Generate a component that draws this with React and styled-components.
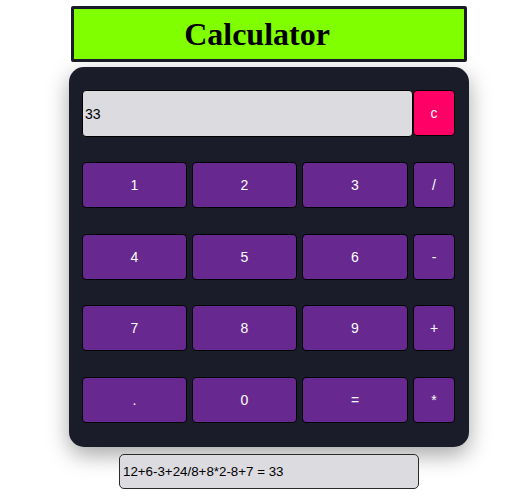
import React from "react";
import styled, { createGlobalStyle } from "styled-components";

const Global = createGlobalStyle`
  html, body { margin: 0; padding: 0; background: #ffffff; }
  body { font-family: "Liberation Sans", Arial, sans-serif; }
`;

const Page = styled.div`
  display: flex;
  flex-direction: column;
  align-items: flex-start;
  padding: 6px 0 0 69px;
`;

const Header = styled.h1`
  box-sizing: border-box;
  margin: 0 0 5px 2px;
  width: 396px;
  height: 56px;
  border: 3px solid #1b1c29;
  border-radius: 2px;
  background: #80ff00;
  padding-right: 24px;
  text-align: center;
  font-family: "Liberation Serif", "Times New Roman", serif;
  font-weight: bold;
  font-size: 32px;
  line-height: 50px;
  color: #000;
`;

const Panel = styled.div`
  box-sizing: border-box;
  width: 400px;
  height: 380px;
  background: #1b1c29;
  border-radius: 15px;
  padding: 23px 14px 24px 13px;
  box-shadow: 0 8px 22px rgba(0, 0, 0, 0.35);
  display: flex;
  flex-direction: column;
  gap: 25px;
`;

const DisplayRow = styled.div`
  display: flex;
  height: 47px;
`;

const Display = styled.div`
  box-sizing: border-box;
  width: 331px;
  height: 47px;
  background: #dcdbe0;
  border: 1px solid #000;
  border-radius: 4px;
  padding: 0 2px;
  display: flex;
  align-items: center;
  font-size: 14px;
  color: #000;
`;

const Keys = styled.div`
  display: grid;
  grid-template-columns: 105px 105px 106px 42px;
  grid-auto-rows: 46px;
  column-gap: 5px;
  row-gap: 25.67px;
`;

const Key = styled.button`
  box-sizing: border-box;
  margin: 0;
  padding: 0;
  width: ${(p) => (p.$w ? p.$w + "px" : "100%")};
  height: ${(p) => (p.$h ? p.$h + "px" : "100%")};
  background: ${(p) => (p.$clear ? "#ff0066" : "#67298f")};
  border: 1px solid #000;
  border-radius: 4px;
  color: #fff;
  font-family: "Liberation Sans", Arial, sans-serif;
  font-size: 14px;
  cursor: pointer;
  display: flex;
  align-items: center;
  justify-content: center;
`;

const Result = styled.div`
  box-sizing: border-box;
  margin: 7px 0 0 50px;
  width: 300px;
  height: 35px;
  background: #dcdbe0;
  border: 1px solid #2a2a2a;
  border-radius: 5px;
  padding: 0 3px;
  display: flex;
  align-items: center;
  font-size: 13.33px;
  color: #000;
`;

const keys = ["1", "2", "3", "/", "4", "5", "6", "-", "7", "8", "9", "+", ".", "0", "=", "*"];

export default function App() {
  return (
    <>
      <Global />
      <Page>
        <Header>Calculator</Header>
        <Panel>
          <DisplayRow>
            <Display>33</Display>
            <Key $clear $w={42} $h={46}>c</Key>
          </DisplayRow>
          <Keys>
            {keys.map((k) => (
              <Key key={k}>{k}</Key>
            ))}
          </Keys>
        </Panel>
        <Result>12+6-3+24/8+8*2-8+7 = 33</Result>
      </Page>
    </>
  );
}
